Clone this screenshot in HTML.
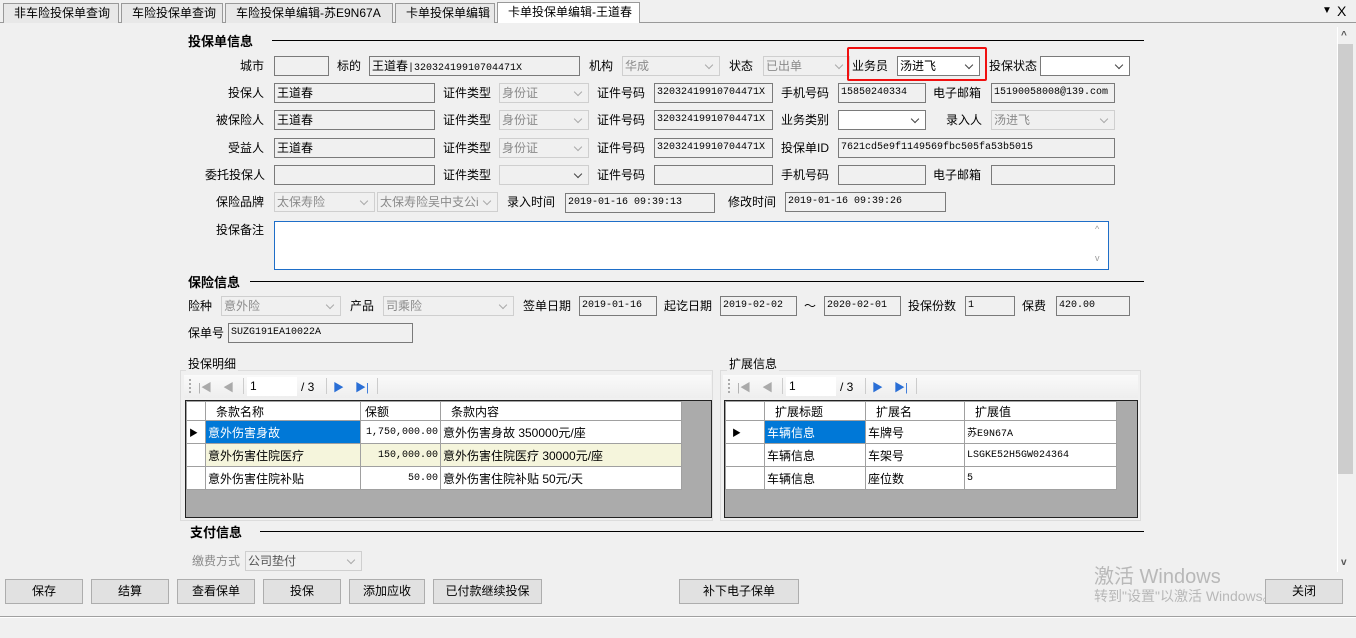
<!DOCTYPE html>
<html><head><meta charset="utf-8"><style>
*{box-sizing:border-box;margin:0;padding:0}
body{width:1356px;height:638px;background:#f0f0f0;font-family:"Liberation Sans","Noto Sans CJK SC","WenQuanYi Zen Hei",sans-serif;font-size:12px;color:#000;position:relative;overflow:hidden}
.a{position:absolute;white-space:nowrap}
.l{position:absolute;white-space:nowrap;line-height:20px;height:20px}
.b{position:absolute;height:20px;background:#f0f0f0;border:1px solid #7a7a7a;line-height:18px;padding-left:2px;font-size:10px;font-family:"Liberation Mono","Noto Sans CJK SC",monospace;overflow:hidden}
.b.z{font-family:"Liberation Sans","Noto Sans CJK SC",sans-serif;font-size:12px}
.c{position:absolute;height:20px;background:#f0f0f0;border:1px solid #cfcfcf;line-height:18px;padding-left:2px;color:#8a8a8a;overflow:hidden}
.c:after{content:"";position:absolute;right:7px;top:5px;width:5px;height:5px;border-right:1px solid #aaa;border-bottom:1px solid #aaa;transform:rotate(45deg)}
.c.w{background:#fff;border-color:#7a7a7a;color:#000}
.c.w:after{border-color:#444}
.h{position:absolute;font-weight:bold;font-size:13px;line-height:16px}
.hl{position:absolute;height:1px;background:#000}
.btn{position:absolute;top:579px;height:25px;background:#e1e1e1;border:1px solid #adadad;text-align:center;line-height:23px}
.tab{position:absolute;top:3px;height:20px;border:1px solid #999;border-bottom:none;background:#e8e8e8;line-height:18px;padding-left:10px;font-size:12px}
table{border-collapse:collapse;position:absolute;background:#fff;table-layout:fixed}
td{border:1px solid #a0a0a0;height:23px;padding:0 2px;white-space:nowrap;font-size:12px;overflow:hidden}
tr.hd td{height:19px;padding-left:10px}
.m{font-family:'Liberation Mono',monospace;font-size:10px}
</style></head><body>
<div class="a" style="left:0;top:22px;width:1356px;height:1px;background:#999"></div>
<div class="tab" style="left:3px;width:116px">非车险投保单查询</div>
<div class="tab" style="left:121px;width:102px">车险投保单查询</div>
<div class="tab" style="left:225px;width:168px">车险投保单编辑-苏E9N67A</div>
<div class="tab" style="left:395px;width:100px">卡单投保单编辑</div>
<div class="tab" style="left:497px;width:143px;background:#fff;height:21px;top:2px">卡单投保单编辑-王道春</div>
<div class="a" style="left:1322px;top:5px;font-size:10px">▼</div>
<div class="a" style="left:1337px;top:3px;font-size:14px">X</div>

<div class="a" style="left:1337px;top:27px;width:19px;height:545px;background:#f0f0f0;border-left:1px solid #fff"></div>
<div class="a" style="left:1338px;top:44px;width:15px;height:430px;background:#cdcdcd"></div>
<div class="a" style="left:1341px;top:30px;font-size:10px;color:#555;font-weight:bold">^</div>
<div class="a" style="left:1341px;top:557px;font-size:10px;color:#555;font-weight:bold">v</div>

<div class="h" style="left:188px;top:34px">投保单信息</div>
<div class="hl" style="left:272px;top:40px;width:872px"></div>

<div class="l" style="left:240px;top:56px">城市</div><div class="b" style="left:274px;top:56px;width:55px"></div>
<div class="l" style="left:337px;top:56px">标的</div><div class="b" style="left:369px;top:56px;width:211px"><span style="font-family:'Noto Sans CJK SC';font-size:12px">王道春</span>|32032419910704471X</div>
<div class="l" style="left:589px;top:56px">机构</div><div class="c" style="left:622px;top:56px;width:98px">华成</div>
<div class="l" style="left:729px;top:56px">状态</div><div class="c" style="left:763px;top:56px;width:87px">已出单</div>
<div class="a" style="left:847px;top:47px;width:140px;height:34px;border:2px solid #f01010;border-radius:2px"></div>
<div class="l" style="left:852px;top:56px">业务员</div><div class="c w" style="left:897px;top:56px;width:83px">汤进飞</div>
<div class="l" style="left:989px;top:56px">投保状态</div><div class="c w" style="left:1040px;top:56px;width:90px"></div>

<div class="l" style="left:228px;top:83px">投保人</div><div class="b z" style="left:274px;top:83px;width:161px">王道春</div>
<div class="l" style="left:443px;top:83px">证件类型</div><div class="c" style="left:499px;top:83px;width:90px">身份证</div>
<div class="l" style="left:597px;top:83px">证件号码</div><div class="b" style="left:654px;top:83px;width:119px">32032419910704471X</div>
<div class="l" style="left:781px;top:83px">手机号码</div><div class="b" style="left:838px;top:83px;width:88px">15850240334</div>
<div class="l" style="left:933px;top:83px">电子邮箱</div><div class="b" style="left:991px;top:83px;width:124px">15190058008@139.com</div>

<div class="l" style="left:216px;top:110px">被保险人</div><div class="b z" style="left:274px;top:110px;width:161px">王道春</div>
<div class="l" style="left:443px;top:110px">证件类型</div><div class="c" style="left:499px;top:110px;width:90px">身份证</div>
<div class="l" style="left:597px;top:110px">证件号码</div><div class="b" style="left:654px;top:110px;width:119px">32032419910704471X</div>
<div class="l" style="left:781px;top:110px">业务类别</div><div class="c w" style="left:838px;top:110px;width:88px"></div>
<div class="l" style="left:946px;top:110px">录入人</div><div class="c" style="left:991px;top:110px;width:124px">汤进飞</div>

<div class="l" style="left:228px;top:138px">受益人</div><div class="b z" style="left:274px;top:138px;width:161px">王道春</div>
<div class="l" style="left:443px;top:138px">证件类型</div><div class="c" style="left:499px;top:138px;width:90px">身份证</div>
<div class="l" style="left:597px;top:138px">证件号码</div><div class="b" style="left:654px;top:138px;width:119px">32032419910704471X</div>
<div class="l" style="left:781px;top:138px">投保单ID</div><div class="b" style="left:838px;top:138px;width:277px">7621cd5e9f1149569fbc505fa53b5015</div>

<div class="l" style="left:205px;top:165px">委托投保人</div><div class="b" style="left:274px;top:165px;width:161px"></div>
<div class="l" style="left:443px;top:165px">证件类型</div><div class="c w" style="left:499px;top:165px;width:90px;border-color:#cfcfcf;background:#f0f0f0"></div>
<div class="l" style="left:597px;top:165px">证件号码</div><div class="b" style="left:654px;top:165px;width:119px"></div>
<div class="l" style="left:781px;top:165px">手机号码</div><div class="b" style="left:838px;top:165px;width:88px"></div>
<div class="l" style="left:933px;top:165px">电子邮箱</div><div class="b" style="left:991px;top:165px;width:124px"></div>

<div class="l" style="left:216px;top:192px">保险品牌</div><div class="c" style="left:274px;top:192px;width:101px">太保寿险</div>
<div class="c" style="left:377px;top:192px;width:121px">太保寿险吴中支公i</div>
<div class="l" style="left:507px;top:192px">录入时间</div><div class="b" style="left:565px;top:193px;width:150px">2019-01-16 09:39:13</div>
<div class="l" style="left:728px;top:192px">修改时间</div><div class="b" style="left:785px;top:192px;width:161px">2019-01-16 09:39:26</div>

<div class="l" style="left:216px;top:220px">投保备注</div>
<div class="a" style="left:274px;top:221px;width:835px;height:49px;background:#fff;border:1px solid #1e6ec8"></div>
<div class="a" style="left:1095px;top:224px;font-size:9px;color:#999">^</div>
<div class="a" style="left:1095px;top:253px;font-size:9px;color:#999">v</div>

<div class="h" style="left:188px;top:275px">保险信息</div>
<div class="hl" style="left:250px;top:281px;width:894px"></div>

<div class="l" style="left:188px;top:296px">险种</div><div class="c" style="left:221px;top:296px;width:120px">意外险</div>
<div class="l" style="left:350px;top:296px">产品</div><div class="c" style="left:383px;top:296px;width:131px">司乘险</div>
<div class="l" style="left:523px;top:296px">签单日期</div><div class="b" style="left:579px;top:296px;width:78px">2019-01-16</div>
<div class="l" style="left:664px;top:296px">起讫日期</div><div class="b" style="left:720px;top:296px;width:77px">2019-02-02</div>
<div class="l" style="left:804px;top:296px">～</div><div class="b" style="left:824px;top:296px;width:77px">2020-02-01</div>
<div class="l" style="left:908px;top:296px">投保份数</div><div class="b" style="left:965px;top:296px;width:50px">1</div>
<div class="l" style="left:1022px;top:296px">保费</div><div class="b" style="left:1056px;top:296px;width:74px">420.00</div>
<div class="l" style="left:188px;top:323px">保单号</div><div class="b" style="left:228px;top:323px;width:185px">SUZG191EA10022A</div>

<div class="a" style="left:180px;top:370px;width:533px;height:151px;border:1px solid #dcdcdc"></div>
<div class="a" style="left:186px;top:356px;background:#f0f0f0;padding:0 2px;line-height:16px">投保明细</div>
<div class="a" style="left:184px;top:375px;width:527px;height:23px;background:linear-gradient(#fafafa,#eeeeee)"></div>
<div class="a" style="left:189px;top:379px;width:2px;height:14px;border-left:2px dotted #aaa"></div>
<div class="a" style="left:198px;top:379px;color:#aaa;font-size:11px">|◀</div>
<div class="a" style="left:223px;top:379px;color:#aaa;font-size:11px">◀</div>
<div class="a" style="left:243px;top:378px;width:1px;height:16px;background:#ccc"></div>
<div class="a" style="left:247px;top:377px;width:50px;height:19px;background:#fff;padding-left:3px;line-height:19px">1</div>
<div class="a" style="left:301px;top:378px;line-height:18px">/ 3</div>
<div class="a" style="left:326px;top:378px;width:1px;height:16px;background:#ccc"></div>
<div class="a" style="left:333px;top:379px;color:#2a6fd6;font-size:11px">▶</div>
<div class="a" style="left:355px;top:379px;color:#2a6fd6;font-size:11px">▶|</div>
<div class="a" style="left:377px;top:378px;width:1px;height:16px;background:#ccc"></div>
<div class="a" style="left:185px;top:400px;width:527px;height:118px;background:#ababab;border:1px solid #222"></div>
<table style="left:186px;top:401px;width:495px">
<col style="width:19px"><col style="width:155px"><col style="width:80px"><col style="width:241px">
<tr class="hd"><td></td><td>条款名称</td><td style="padding-left:4px">保额</td><td>条款内容</td></tr>
<tr><td style="font-size:9px">▶</td><td style="background:#0078d7;color:#fff">意外伤害身故</td><td class="m" style="text-align:right">1,750,000.00</td><td>意外伤害身故 350000元/座</td></tr>
<tr style="background:#f5f5dc"><td style="background:#fff"></td><td>意外伤害住院医疗</td><td class="m" style="text-align:right">150,000.00</td><td>意外伤害住院医疗 30000元/座</td></tr>
<tr><td></td><td>意外伤害住院补贴</td><td class="m" style="text-align:right">50.00</td><td>意外伤害住院补贴 50元/天</td></tr>
</table>

<div class="a" style="left:720px;top:370px;width:421px;height:151px;border:1px solid #dcdcdc"></div>
<div class="a" style="left:727px;top:356px;background:#f0f0f0;padding:0 2px;line-height:16px">扩展信息</div>
<div class="a" style="left:723px;top:375px;width:415px;height:23px;background:linear-gradient(#fafafa,#eeeeee)"></div>
<div class="a" style="left:728px;top:379px;width:2px;height:14px;border-left:2px dotted #aaa"></div>
<div class="a" style="left:737px;top:379px;color:#aaa;font-size:11px">|◀</div>
<div class="a" style="left:762px;top:379px;color:#aaa;font-size:11px">◀</div>
<div class="a" style="left:782px;top:378px;width:1px;height:16px;background:#ccc"></div>
<div class="a" style="left:786px;top:377px;width:50px;height:19px;background:#fff;padding-left:3px;line-height:19px">1</div>
<div class="a" style="left:840px;top:378px;line-height:18px">/ 3</div>
<div class="a" style="left:865px;top:378px;width:1px;height:16px;background:#ccc"></div>
<div class="a" style="left:872px;top:379px;color:#2a6fd6;font-size:11px">▶</div>
<div class="a" style="left:894px;top:379px;color:#2a6fd6;font-size:11px">▶|</div>
<div class="a" style="left:916px;top:378px;width:1px;height:16px;background:#ccc"></div>
<div class="a" style="left:724px;top:400px;width:414px;height:118px;background:#ababab;border:1px solid #222"></div>
<table style="left:725px;top:401px;width:391px">
<col style="width:39px"><col style="width:101px"><col style="width:99px"><col style="width:152px">
<tr class="hd"><td></td><td>扩展标题</td><td>扩展名</td><td>扩展值</td></tr>
<tr><td style="font-size:9px;padding-left:6px">▶</td><td style="background:#0078d7;color:#fff">车辆信息</td><td>车牌号</td><td style="font-family:'Liberation Mono','Noto Sans CJK SC';font-size:10px">苏E9N67A</td></tr>
<tr><td></td><td>车辆信息</td><td>车架号</td><td class="m">LSGKE52H5GW024364</td></tr>
<tr><td></td><td>车辆信息</td><td>座位数</td><td class="m">5</td></tr>
</table>

<div class="h" style="left:190px;top:525px">支付信息</div>
<div class="hl" style="left:260px;top:531px;width:884px"></div>
<div class="l" style="left:192px;top:551px;color:#8a8a8a">缴费方式</div><div class="c" style="left:245px;top:551px;width:117px;color:#555">公司垫付</div>

<div class="btn" style="left:5px;width:78px">保存</div>
<div class="btn" style="left:91px;width:78px">结算</div>
<div class="btn" style="left:177px;width:78px">查看保单</div>
<div class="btn" style="left:263px;width:78px">投保</div>
<div class="btn" style="left:349px;width:76px">添加应收</div>
<div class="btn" style="left:433px;width:109px">已付款继续投保</div>
<div class="btn" style="left:679px;width:120px">补下电子保单</div>
<div class="a" style="left:1094px;top:560px;font-size:20px;color:#b8b8b8">激活 Windows</div>
<div class="a" style="left:1094px;top:586px;font-size:14px;color:#b8b8b8">转到"设置"以激活 Windows。</div>
<div class="btn" style="left:1265px;width:78px">关闭</div>

<div class="a" style="left:0;top:616px;width:1356px;height:2px;background:#a0a0a0;border-bottom:1px solid #fff"></div>
</body></html>
